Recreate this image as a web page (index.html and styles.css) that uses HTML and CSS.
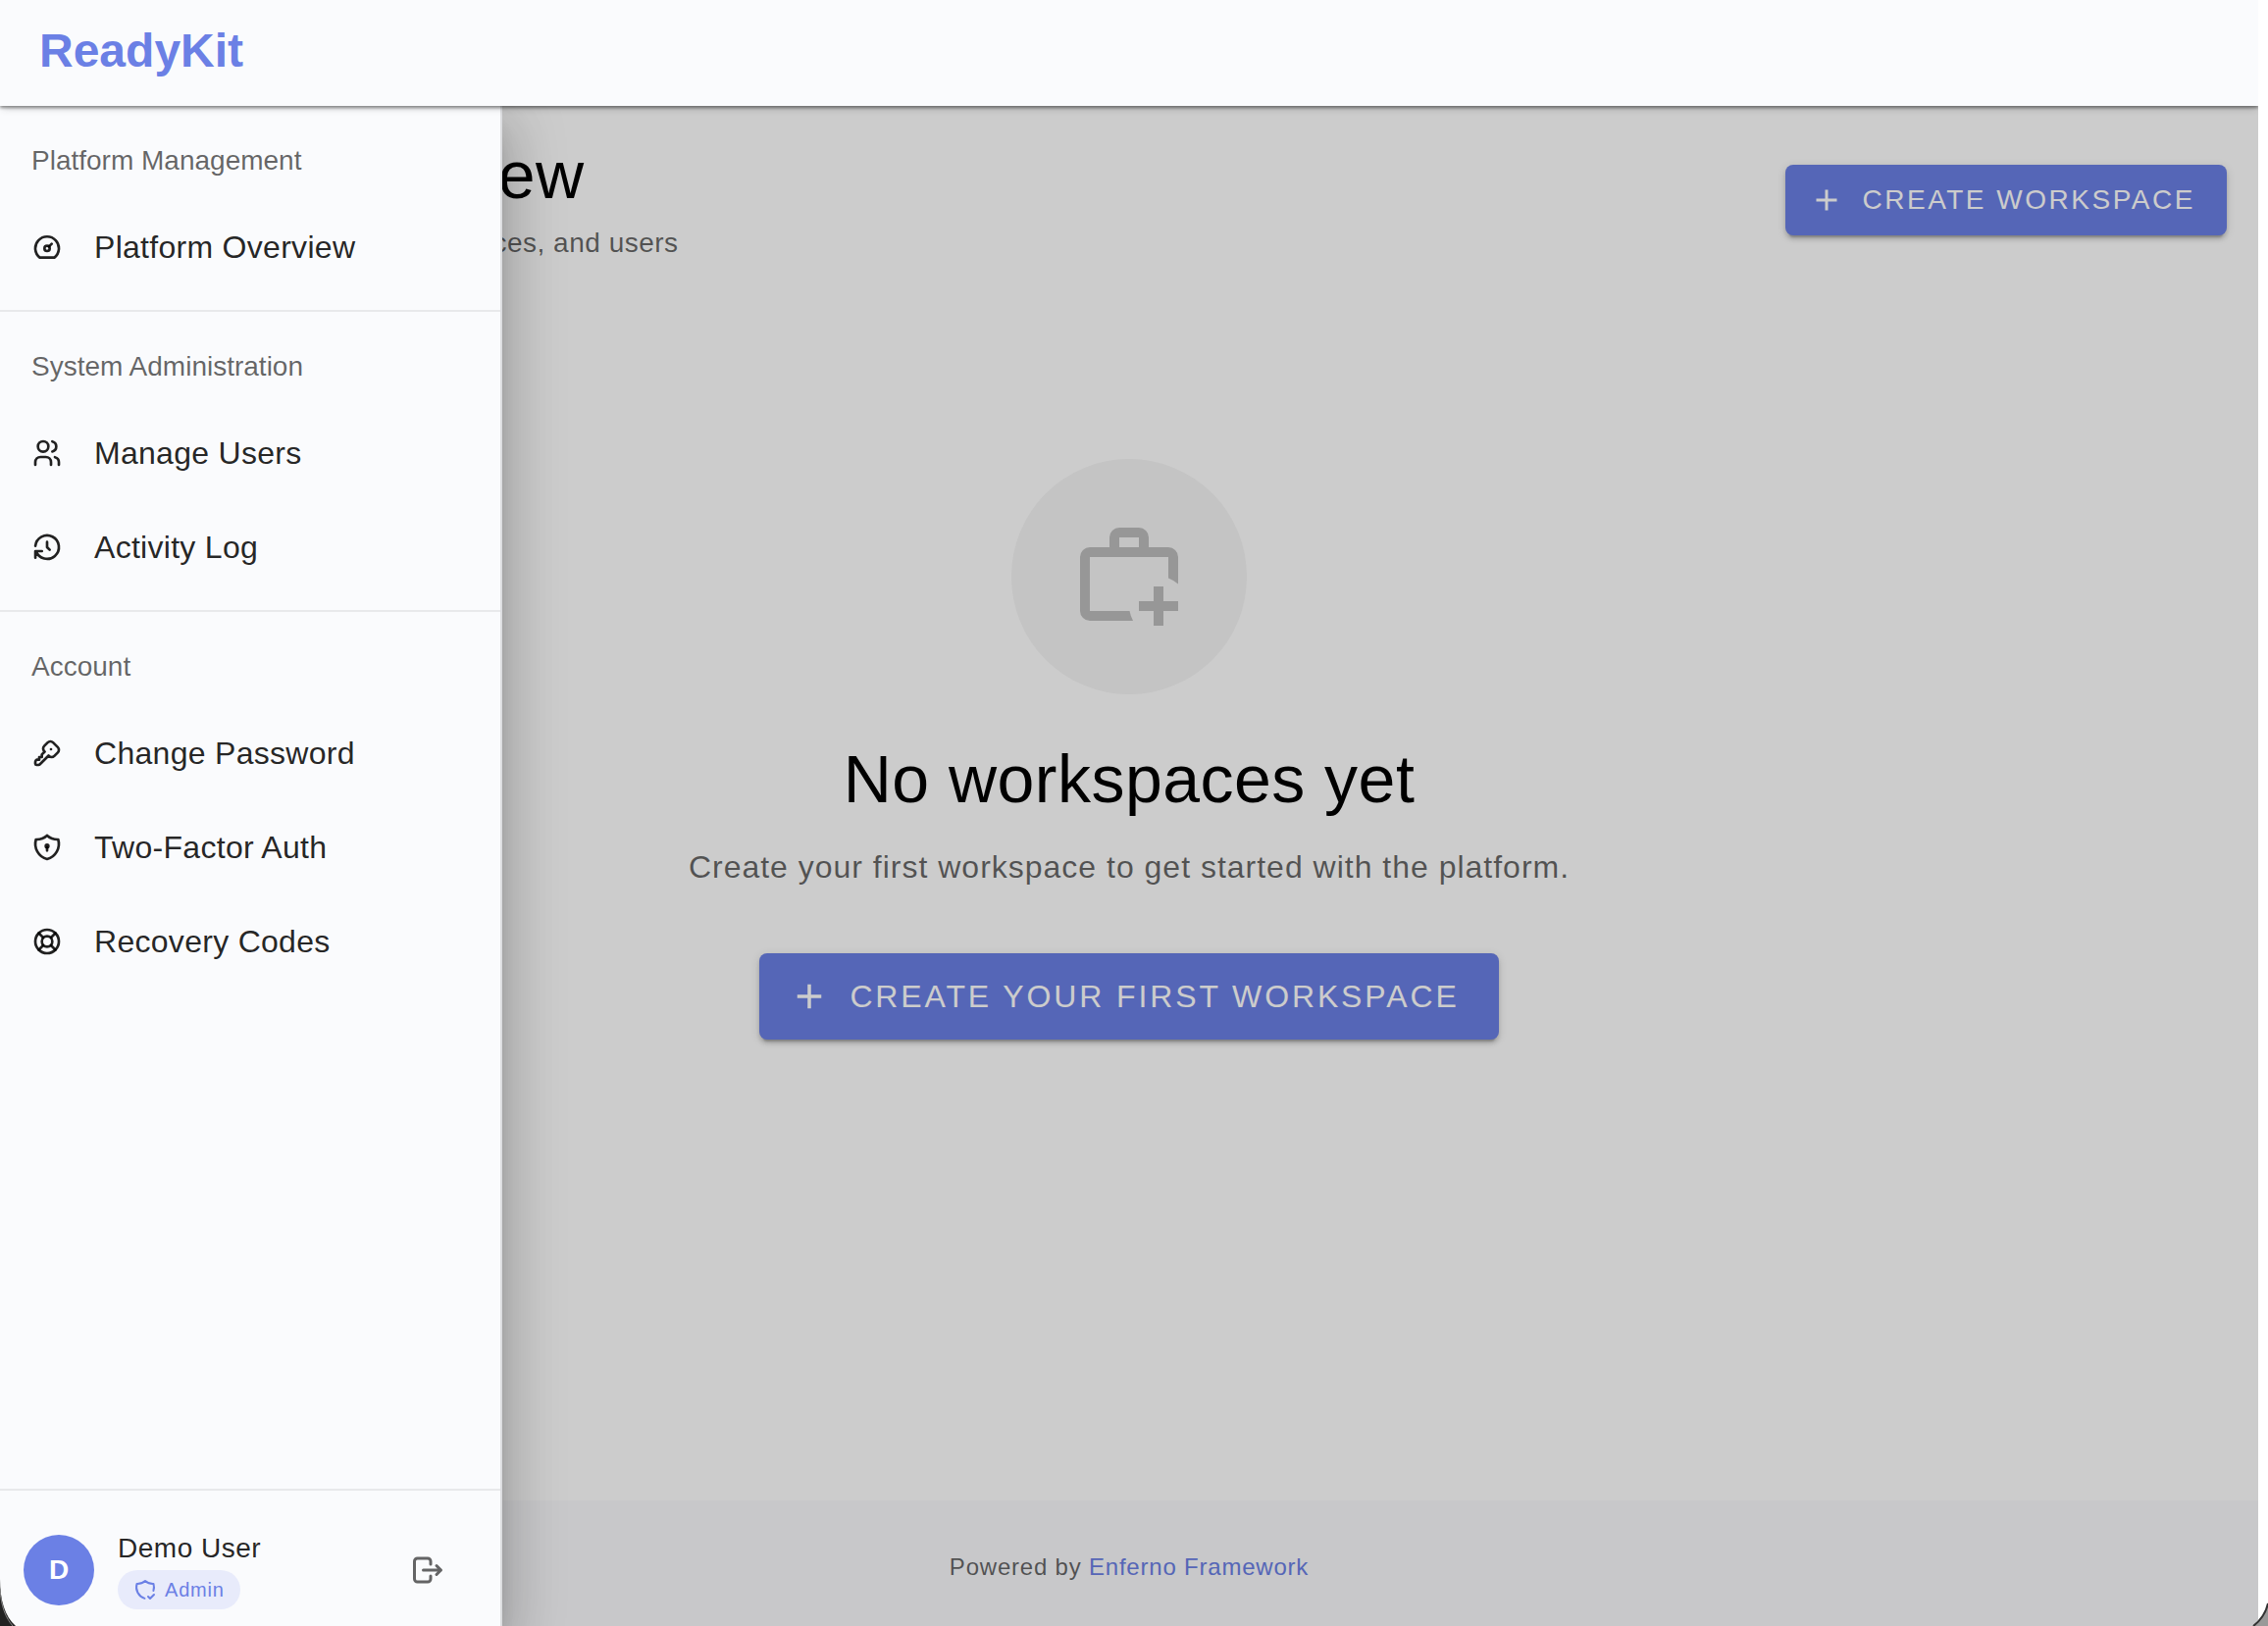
FILE: index.html
```html
<!DOCTYPE html>
<html lang="en">
<head>
    <meta charset="UTF-8">
    <meta name="viewport" content="width=device-width, initial-scale=1.0">
    <title>ReadyKit</title>
    <link rel="stylesheet" href="styles.css">
</head>
<body>
    <div class="app">
        <header class="app-bar">
            <a class="brand" href="#">ReadyKit</a>
        </header>

        <div class="layout">
            <main class="content">
                <div class="page-header">
                    <div class="page-heading">
                        <h1>Platform Overview</h1>
                        <p>Monitor platform resources, workspaces, and users</p>
                    </div>
                    <button class="btn" type="button">
                        <svg class="btn-icon" viewBox="0 0 24 24" aria-hidden="true"><path d="M19 13h-6v6h-2v-6H5v-2h6V5h2v6h6z"/></svg>
                        Create Workspace
                    </button>
                </div>

                <section class="empty-state">
                    <div class="empty-circle">
                        <svg viewBox="0 0 24 24" aria-hidden="true"><path d="M20 6h-4V4a2 2 0 0 0-2-2h-4a2 2 0 0 0-2 2v2H4a2 2 0 0 0-2 2v11a2 2 0 0 0 2 2h8.8a7 7 0 0 1-.7-2H4V8h16v4.3a7 7 0 0 1 2 1.2V8a2 2 0 0 0-2-2M10 4h4v2h-4zM19 17h3v2h-3v3h-2v-3h-3v-2h3v-3h2z"/></svg>
                    </div>
                    <h2>No workspaces yet</h2>
                    <p>Create your first workspace to get started with the platform.</p>
                    <button class="btn btn-large" type="button">
                        <svg class="btn-icon" viewBox="0 0 24 24" aria-hidden="true"><path d="M19 13h-6v6h-2v-6H5v-2h6V5h2v6h6z"/></svg>
                        Create Your First Workspace
                    </button>
                </section>
            </main>

            <footer class="footer">
                <p>Powered by <a href="#">Enferno Framework</a></p>
            </footer>

            <div class="scrim"></div>

            <aside class="drawer">
                <nav class="drawer-nav">
                    <div class="nav-group">
                        <h3>Platform Management</h3>
                        <a class="nav-item" href="#">
                            <svg class="icon" viewBox="0 0 24 24" aria-hidden="true"><circle cx="12" cy="13" r="2"/><path d="M13.45 11.55l2.05-2.05M6.4 20a9 9 0 1 1 11.2 0z"/></svg>
                            Platform Overview
                        </a>
                    </div>
                    <div class="nav-group">
                        <h3>System Administration</h3>
                        <a class="nav-item" href="#">
                            <svg class="icon" viewBox="0 0 24 24" aria-hidden="true"><circle cx="9" cy="7" r="4"/><path d="M3 21v-2a4 4 0 0 1 4-4h4a4 4 0 0 1 4 4v2M16 3.13a4 4 0 0 1 0 7.75M21 21v-2a4 4 0 0 0-3-3.85"/></svg>
                            Manage Users
                        </a>
                        <a class="nav-item" href="#">
                            <svg class="icon" viewBox="0 0 24 24" aria-hidden="true"><path d="M12 8v4l2 2M3.05 11a9 9 0 1 1 .5 4m-.5 5v-5h5"/></svg>
                            Activity Log
                        </a>
                    </div>
                    <div class="nav-group">
                        <h3>Account</h3>
                        <a class="nav-item" href="#">
                            <svg class="icon" viewBox="0 0 24 24" aria-hidden="true"><path d="M16.555 3.843l3.602 3.602a2.877 2.877 0 0 1 0 4.069l-2.643 2.643a2.877 2.877 0 0 1-4.069 0l-.301-.301l-6.558 6.558a2 2 0 0 1-1.239.578l-.175.008h-1.172a1 1 0 0 1-.993-.883l-.007-.117v-1.172a2 2 0 0 1 .467-1.284l.119-.13l.414-.414h2v-2h2v-2l2.144-2.144l-.301-.301a2.877 2.877 0 0 1 0-4.069l2.643-2.643a2.877 2.877 0 0 1 4.069 0zM15 9h.01"/></svg>
                            Change Password
                        </a>
                        <a class="nav-item" href="#">
                            <svg class="icon" viewBox="0 0 24 24" aria-hidden="true"><path d="M12 3a12 12 0 0 0 8.5 3a12 12 0 0 1-8.5 15a12 12 0 0 1-8.5-15a12 12 0 0 0 8.5-3M12 12v2.5"/><circle cx="12" cy="11" r="1"/></svg>
                            Two-Factor Auth
                        </a>
                        <a class="nav-item" href="#">
                            <svg class="icon" viewBox="0 0 24 24" aria-hidden="true"><circle cx="12" cy="12" r="4"/><circle cx="12" cy="12" r="9"/><path d="M15 15l3.35 3.35M9 15l-3.35 3.35M5.65 5.65l3.35 3.35M18.35 5.65l-3.35 3.35"/></svg>
                            Recovery Codes
                        </a>
                    </div>
                </nav>

                <div class="drawer-user">
                    <span class="avatar">D</span>
                    <div class="user-info">
                        <span class="user-name">Demo User</span>
                        <span class="chip">
                            <svg class="icon" viewBox="0 0 24 24" aria-hidden="true"><path d="M11.46 20.846a12 12 0 0 1-7.96-14.846a12 12 0 0 0 8.5-3a12 12 0 0 0 8.5 3a12 12 0 0 1-.09 7.06M15 19l2 2l4-4"/></svg>
                            Admin
                        </span>
                    </div>
                    <button class="logout" type="button" aria-label="Log out">
                        <svg class="icon" viewBox="0 0 24 24" aria-hidden="true"><path d="M14 8V6a2 2 0 0 0-2-2H5a2 2 0 0 0-2 2v12a2 2 0 0 0 2 2h7a2 2 0 0 0 2-2v-2M9 12h12l-3-3M18 15l3-3"/></svg>
                    </button>
                </div>
            </aside>
        </div>
    </div>

    <!-- rounded window corners -->
    <svg class="corner corner-left" viewBox="0 0 16 48" aria-hidden="true"><path class="corner-fill" d="M0 0C0 22 5 38 16 48H0z"/><path class="corner-rim" d="M0 10C1 28 6 40 13 48"/></svg>
    <svg class="corner corner-right" viewBox="0 0 16 24" aria-hidden="true"><path class="corner-back" d="M16 0C14 10 9 18 1 24H16z"/><path class="corner-edge" d="M16 1C14 10 9 18 1 24"/></svg>
</body>
</html>
```

FILE: styles.css
```css
* {
    margin: 0;
    padding: 0;
    box-sizing: border-box;
}

:root {
    --primary: #6b80e5;
    --surface: #fafbfd;
    --text: rgba(0, 0, 0, 0.87);
    --muted: rgba(0, 0, 0, 0.6);
    --border: rgba(0, 0, 0, 0.07);
}

body {
    background: #fff;
    padding-right: 10px;
    font-family: "Liberation Sans", Arial, sans-serif;
    font-size: 32px;
}

a {
    color: inherit;
    text-decoration: none;
}

button {
    border: none;
    font: inherit;
    cursor: pointer;
}

.app {
    min-height: 100vh;
    display: flex;
    flex-direction: column;
    overflow: hidden;
}

/* top bar */
.app-bar {
    position: relative;
    z-index: 3;
    height: 108px;
    padding: 0 40px 6px;
    display: flex;
    align-items: center;
    background: var(--surface);
    box-shadow: 0 4px 8px -2px rgba(0, 0, 0, 0.2), 0 2px 3px rgba(0, 0, 0, 0.4);
}

.brand {
    color: var(--primary);
    font-size: 48px;
    font-weight: bold;
}

.layout {
    position: relative;
    flex: 1;
    display: flex;
    flex-direction: column;
}

/* page content */
.content {
    flex: 1;
    padding: 32px;
}

.page-header {
    display: flex;
    justify-content: space-between;
    align-items: center;
}

.page-heading {
    display: flex;
    flex-direction: column;
    gap: 12px;
}

h1,
h2 {
    color: #000;
    font-size: 68px;
    font-weight: normal;
    letter-spacing: 0.007em;
}

h1 {
    line-height: 76px;
}

.page-heading p {
    color: var(--muted);
    font-size: 28px;
    line-height: 40px;
    letter-spacing: 0.018em;
}

.btn {
    height: 72px;
    padding: 0 32px 0 24px;
    display: inline-flex;
    align-items: center;
    gap: 18px;
    border-radius: 8px;
    background: var(--primary);
    color: #fff;
    font-size: 28px;
    letter-spacing: 0.09em;
    text-transform: uppercase;
    box-shadow: 0 6px 2px -4px rgba(0, 0, 0, 0.2), 0 4px 4px rgba(0, 0, 0, 0.14), 0 2px 10px rgba(0, 0, 0, 0.12);
}

.btn-icon {
    width: 36px;
    height: 36px;
    fill: currentColor;
}

.btn-large {
    height: 88px;
    padding: 0 40px 0 30px;
    gap: 20px;
    font-size: 32px;
}

.btn-large .btn-icon {
    width: 42px;
    height: 42px;
}

.empty-state {
    padding-top: 200px;
    display: flex;
    flex-direction: column;
    align-items: center;
}

.empty-circle {
    width: 240px;
    height: 240px;
    display: flex;
    align-items: center;
    justify-content: center;
    border-radius: 50%;
    background: #f5f5f5;
}

.empty-circle svg {
    width: 120px;
    height: 120px;
    fill: #bdbdbd;
}

.empty-state h2 {
    margin-top: 46px;
    line-height: 80px;
}

.empty-state p {
    margin: 26px 0 64px;
    color: var(--muted);
    line-height: 48px;
    letter-spacing: 0.031em;
}

.footer {
    padding: 48px 32px 40px;
    background: var(--surface);
    color: var(--muted);
    font-size: 24px;
    line-height: 40px;
    letter-spacing: 0.033em;
    text-align: center;
}

.footer a {
    color: var(--primary);
}

.scrim {
    position: absolute;
    inset: 0;
    z-index: 1;
    background: rgba(0, 0, 0, 0.2);
}

/* navigation drawer */
.drawer {
    position: absolute;
    top: 0;
    bottom: 0;
    left: 0;
    z-index: 2;
    width: 512px;
    display: flex;
    flex-direction: column;
    background: var(--surface);
    border-right: 2px solid #dcdde0;
    box-shadow: 0 16px 20px -10px rgba(0, 0, 0, 0.2), 0 32px 48px 4px rgba(0, 0, 0, 0.14), 0 12px 60px 10px rgba(0, 0, 0, 0.12);
}

.drawer-nav {
    flex: 1;
}

.nav-group {
    padding: 16px 0;
}

.nav-group + .nav-group {
    border-top: 2px solid var(--border);
}

.nav-group h3 {
    padding: 0 32px;
    color: var(--muted);
    font-size: 28px;
    font-weight: normal;
    line-height: 80px;
}

.nav-item {
    height: 96px;
    padding: 0 32px;
    display: flex;
    align-items: center;
    gap: 32px;
    color: var(--text);
    letter-spacing: 0.009em;
}

.icon {
    width: 32px;
    height: 32px;
    flex: none;
    fill: none;
    stroke: currentColor;
    stroke-width: 2;
    stroke-linecap: round;
    stroke-linejoin: round;
}

.drawer-user {
    padding: 41px 38px 17px 24px;
    display: flex;
    align-items: center;
    gap: 24px;
    border-top: 2px solid var(--border);
}

.avatar {
    width: 72px;
    height: 72px;
    display: flex;
    align-items: center;
    justify-content: center;
    border-radius: 50%;
    background: var(--primary);
    color: #fff;
    font-size: 28px;
    font-weight: bold;
}

.user-info {
    flex: 1;
    display: flex;
    flex-direction: column;
    align-items: flex-start;
    gap: 4px;
}

.user-name {
    color: var(--text);
    font-size: 28px;
    line-height: 36px;
    letter-spacing: 0.018em;
}

.chip {
    height: 40px;
    padding: 0 16px;
    display: flex;
    align-items: center;
    gap: 8px;
    border-radius: 20px;
    background: #e8ebfb;
    color: var(--primary);
    font-size: 20px;
    letter-spacing: 0.04em;
}

.chip .icon {
    width: 24px;
    height: 24px;
}

.logout {
    width: 72px;
    height: 72px;
    display: flex;
    align-items: center;
    justify-content: center;
    border-radius: 50%;
    background: none;
    color: var(--muted);
}

.logout .icon {
    width: 36px;
    height: 36px;
}

.corner {
    position: fixed;
    bottom: 0;
    z-index: 4;
    width: 16px;
}

.corner-left {
    left: 0;
    height: 48px;
}

.corner-right {
    right: 0;
    height: 24px;
}

.corner-fill {
    fill: #222;
}

.corner-back {
    fill: #999;
}

.corner-rim,
.corner-edge {
    fill: none;
    stroke: #888;
}

.corner-edge {
    stroke: #333;
    stroke-width: 2;
}
```
